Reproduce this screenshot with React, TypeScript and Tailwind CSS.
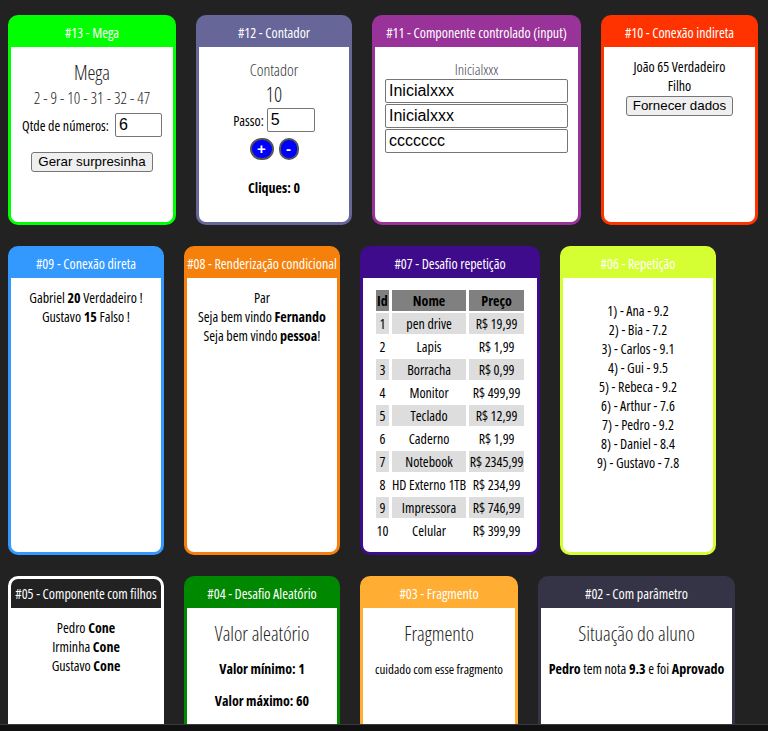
import React from 'react';

const arial = "font-['Liberation_Sans',Arial,sans-serif] font-stretch-normal";

type CardProps = {
  title: string;
  frame: string;
  size: string;
  bodyClass?: string;
  children?: React.ReactNode;
};

function Card({ title, frame, size, bodyClass = '', children }: CardProps) {
  return (
    <div className={`flex flex-col overflow-hidden rounded-[10px] border-[3px] ${frame} ${size}`}>
      <div className="flex h-[29px] shrink-0 items-center justify-center whitespace-nowrap text-[14px] font-medium text-white">
        {title}
      </div>
      <div className={`flex flex-1 flex-col items-center bg-white px-[10px] text-center text-black ${bodyClass}`}>
        {children}
      </div>
    </div>
  );
}

const inputClass = `${arial} h-[24px] rounded-[2px] border border-[#767676] bg-white px-[3px] text-[16px] text-black outline-none`;
const buttonClass = `${arial} h-[20px] rounded-[3px] border border-[#767676] bg-[#efefef] px-[6px] text-[13.33px] leading-none text-black`;

const produtos = [
  { id: 1, nome: 'pen drive', preco: 'R$ 19,99' },
  { id: 2, nome: 'Lapis', preco: 'R$ 1,99' },
  { id: 3, nome: 'Borracha', preco: 'R$ 0,99' },
  { id: 4, nome: 'Monitor', preco: 'R$ 499,99' },
  { id: 5, nome: 'Teclado', preco: 'R$ 12,99' },
  { id: 6, nome: 'Caderno', preco: 'R$ 1,99' },
  { id: 7, nome: 'Notebook', preco: 'R$ 2345,99' },
  { id: 8, nome: 'HD Externo 1TB', preco: 'R$ 234,99' },
  { id: 9, nome: 'Impressora', preco: 'R$ 746,99' },
  { id: 10, nome: 'Celular', preco: 'R$ 399,99' },
];

const alunos = [
  ['Ana', '9.2'],
  ['Bia', '7.2'],
  ['Carlos', '9.1'],
  ['Gui', '9.5'],
  ['Rebeca', '9.2'],
  ['Arthur', '7.6'],
  ['Pedro', '9.2'],
  ['Daniel', '8.4'],
  ['Gustavo', '7.8'],
];

export default function App() {
  return (
    <div className="relative h-screen overflow-hidden bg-[#222222] font-['Open_Sans',sans-serif] font-stretch-condensed">
      <div className="flex flex-wrap gap-x-5 gap-y-[21px] pl-2 pt-[15px]">
        {/* Row 1 */}
        <Card title="#13 - Mega" frame="border-[#00ff00] bg-[#00ff00]" size="w-[168px] h-[210px]" bodyClass="pt-[14px]">
          <div className="text-[20px] leading-[24px] font-light text-[#222]">Mega</div>
          <div className="mt-[3px] whitespace-nowrap text-[16px] leading-[20px] font-light text-[#222]">2 - 9 - 10 - 31 - 32 - 47</div>
          <div className="mt-[5px] flex items-center gap-[6px]">
            <span className="whitespace-nowrap text-[14px] font-medium">Qtde de números:</span>
            <input className={`${inputClass} w-[47px]`} defaultValue="6" />
          </div>
          <button className={`${buttonClass} mt-[15px] whitespace-nowrap`}>Gerar surpresinha</button>
        </Card>

        <Card title="#12 - Contador" frame="border-[#666699] bg-[#666699]" size="w-[156px] h-[210px]" bodyClass="pt-[13px]">
          <div className="text-[16px] leading-[20px] font-light text-[#333]">Contador</div>
          <div className="mt-[3px] text-[20px] leading-[24px] font-light text-[#222]">10</div>
          <div className="mt-px flex items-center gap-[3px]">
            <span className="text-[14px] font-medium">Passo:</span>
            <input className={`${inputClass} w-[48px]`} defaultValue="5" />
          </div>
          <div className="mt-[6px] flex gap-[5px]">
            <button className={`${arial} flex h-[22px] w-[24px] items-center justify-center rounded-full border-2 border-[#555] bg-[#0000ff] text-[15px] font-bold text-white`}>+</button>
            <button className={`${arial} flex h-[22px] w-[20px] items-center justify-center rounded-full border-2 border-[#555] bg-[#0000ff] text-[15px] font-bold text-white`}>-</button>
          </div>
          <div className="mt-[18px] text-[14px] leading-[20px] font-bold">Cliques: 0</div>
        </Card>

        <Card title="#11 - Componente controlado (input)" frame="border-[#993399] bg-[#993399]" size="w-[209px] h-[210px]" bodyClass="pt-[13px]">
          <div className="text-[15px] leading-[18px] font-light text-[#445]">Inicialxxx</div>
          <input className={`${inputClass} mt-px h-[23px] w-[183px]`} defaultValue="Inicialxxx" />
          <input className={`${inputClass} mt-px h-[23px] w-[183px]`} defaultValue="Inicialxxx" />
          <input className={`${inputClass} mt-px h-[23px] w-[183px]`} defaultValue="ccccccc" />
        </Card>

        <Card title="#10 - Conexão indireta" frame="border-[#ff3300] bg-[#ff3300]" size="w-[157px] h-[210px]" bodyClass="pt-[10px] font-medium">
          <div className="text-[14px] leading-[19px]">João 65 Verdadeiro</div>
          <div className="text-[14px] leading-[19px]">Filho</div>
          <button className={`${buttonClass} mt-px font-normal`}>Fornecer dados</button>
        </Card>

        {/* Row 2 */}
        <Card title="#09 - Conexão direta" frame="border-[#3399ff] bg-[#3399ff]" size="w-[156px] h-[309px]" bodyClass="pt-[10px] text-[14px] leading-[19px] font-medium">
          <div>Gabriel <b>20</b> Verdadeiro !</div>
          <div>Gustavo <b>15</b> Falso !</div>
        </Card>

        <Card title="#08 - Renderização condicional" frame="border-[#f5800b] bg-[#f5800b]" size="w-[156px] h-[309px]" bodyClass="pt-[10px] text-[14px] leading-[19px] font-medium">
          <div>Par</div>
          <div className="whitespace-nowrap">Seja bem vindo <b>Fernando</b></div>
          <div className="whitespace-nowrap">Seja bem vindo <b>pessoa</b>!</div>
        </Card>

        <Card title="#07 - Desafio repetição" frame="border-[#3d0b8b] bg-[#3d0b8b]" size="w-[180px] h-[309px]" bodyClass="pt-[10px]">
          <table className="border-separate border-spacing-x-[3px] border-spacing-y-[2px] text-[14px] font-medium">
            <thead>
              <tr className="bg-[#808080]">
                <th className="h-[21px] w-[16px] p-0 font-bold">Id</th>
                <th className="h-[21px] w-[73px] p-0 font-bold">Nome</th>
                <th className="h-[21px] w-[58px] p-0 font-bold">Preço</th>
              </tr>
            </thead>
            <tbody>
              {produtos.map((p) => (
                <tr key={p.id} className={p.id % 2 === 1 ? 'bg-[#dddddd]' : ''}>
                  <td className="h-[21px] p-0 whitespace-nowrap">{p.id}</td>
                  <td className="h-[21px] p-0 whitespace-nowrap">{p.nome}</td>
                  <td className="h-[21px] p-0 whitespace-nowrap">{p.preco}</td>
                </tr>
              ))}
            </tbody>
          </table>
        </Card>

        <Card title="#06 - Repetição" frame="border-[#d5ff32] bg-[#d5ff32]" size="w-[156px] h-[309px]" bodyClass="pt-[23px]">
          <ul className="text-[14px] leading-[19px] font-medium">
            {alunos.map(([nome, nota], i) => (
              <li key={nome}>{i + 1}) - {nome} - {nota}</li>
            ))}
          </ul>
        </Card>

        {/* Row 3 */}
        <Card title="#05 - Componente com filhos" frame="border-white bg-[#222222]" size="w-[156px] h-[170px]" bodyClass="pt-[10px] text-[14px] leading-[19px] font-medium">
          <div>Pedro <b>Cone</b></div>
          <div>Irminha <b>Cone</b></div>
          <div>Gustavo <b>Cone</b></div>
        </Card>

        <Card title="#04 - Desafio Aleatório" frame="border-[#008800] bg-[#008800]" size="w-[156px] h-[170px]" bodyClass="pt-[13px]">
          <div className="whitespace-nowrap text-[20px] leading-[26px] font-light text-[#222]">Valor aleatório</div>
          <div className="mt-[12px] text-[14px] leading-[20px] font-bold">Valor mínimo: 1</div>
          <div className="mt-[12px] text-[14px] leading-[20px] font-bold">Valor máximo: 60</div>
        </Card>

        <Card title="#03 - Fragmento" frame="border-[#ffad33] bg-[#ffad33]" size="w-[158px] h-[170px]" bodyClass="pt-[13px]">
          <div className="text-[20px] leading-[26px] font-light text-[#222]">Fragmento</div>
          <div className="mt-[12px] whitespace-nowrap text-[13px] leading-[20px] font-medium">cuidado com esse fragmento</div>
        </Card>

        <Card title="#02 - Com parâmetro" frame="border-[#343446] bg-[#343446]" size="w-[197px] h-[170px]" bodyClass="pt-[13px]">
          <div className="whitespace-nowrap text-[20px] leading-[26px] font-light text-[#222]">Situação do aluno</div>
          <div className="mt-[12px] whitespace-nowrap text-[14px] leading-[20px] font-medium">
            <b>Pedro</b> tem nota <b>9.3</b> e foi <b>Aprovado</b>
          </div>
        </Card>
      </div>

      {/* bottom strip of the window */}
      <div className="absolute inset-x-0 bottom-0 h-[7px] border-t border-[#3a3a3a] bg-[#111111]" />
    </div>
  );
}
